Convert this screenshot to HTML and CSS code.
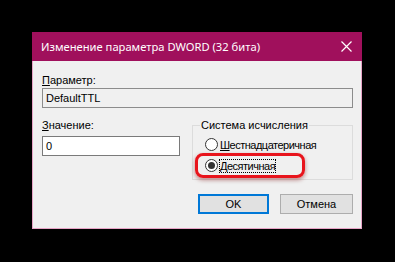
FILE: index.html
```html
<!DOCTYPE html>
<html lang="ru">
<head>
    <meta charset="UTF-8">
    <title>Изменение параметра DWORD (32 бита)</title>
    <link rel="stylesheet" href="styles.css">
</head>
<body>
    <div class="dialog">
        <div class="titlebar">
            <span class="title">Изменение параметра DWORD (32 бита)</span>
            <span class="close">
                <svg width="11" height="11" viewBox="0 0 11 11">
                    <path d="M0.5 0.5 L10.5 10.5 M10.5 0.5 L0.5 10.5" stroke="#fff" stroke-width="1.2" fill="none"/>
                </svg>
            </span>
        </div>
        <div class="content">
            <div class="label"><u>П</u>араметр:</div>
            <div class="field readonly">DefaultTTL</div>

            <div class="row">
                <div class="value-col">
                    <div class="label"><u>З</u>начение:</div>
                    <div class="field value">0</div>
                </div>
                <fieldset class="group">
                    <legend>Система исчисления</legend>
                    <div class="radio">
                        <span class="dot"></span>
                        <span><u>Ш</u>естнадцатеричная</span>
                    </div>
                    <div class="radio checked">
                        <span class="dot"></span>
                        <span class="focus"><u>Д</u>есятичная</span>
                        <span class="mark"></span>
                    </div>
                </fieldset>
            </div>

            <div class="buttons">
                <button class="btn default">OK</button>
                <button class="btn">Отмена</button>
            </div>
        </div>
    </div>
</body>
</html>
```

FILE: styles.css
```css
* {
    margin: 0;
    padding: 0;
    box-sizing: border-box;
}

body {
    background-color: #000;
    font-family: "Liberation Sans", Arial, sans-serif;
    font-size: 11px;
    color: #000;
    width: 395px;
    height: 262px;
    overflow: hidden;
}

.dialog {
    margin: 32px 0 0 32px;
    width: 330px;
    height: 197px;
    display: flex;
    flex-direction: column;
}

.titlebar {
    height: 29px;
    background-color: #a0105c;
    color: #fff;
    display: flex;
    align-items: center;
    justify-content: space-between;
    padding: 0 10px 0 9px;
}

.title {
    font-family: "Noto Sans", sans-serif;
    font-size: 11.2px;
}

.close {
    display: flex;
}

.content {
    flex: 1;
    background-color: #f0f0f0;
    border: 1px solid #e7a3c6;
    border-top: none;
    padding: 13px 8px 0 9px;
}

.label {
    line-height: 13px;
    height: 13px;
}

.field {
    height: 20px;
    border: 1px solid #7a7a7a;
    padding: 0 3px;
    line-height: 18px;
    margin-top: 1px;
}

.readonly {
    background-color: #f0f0f0;
    border-color: #8c8c8c;
}

.value {
    background-color: #fff;
    margin-top: 4px;
    width: 138px;
}

.row {
    display: flex;
    margin-top: 11px;
}

.value-col {
    width: 138px;
}

.group {
    margin-left: 12px;
    width: 161px;
    height: 61px;
    border: 1px solid #dcdcdc;
    padding: 2px 0 0 12px;
}

.group legend {
    padding: 0 1px;
    margin-left: -5px;
    line-height: 13px;
}

.radio {
    display: flex;
    align-items: center;
    height: 21px;
    position: relative;
    letter-spacing: -0.5px;
}

.dot {
    width: 13px;
    height: 13px;
    border: 1px solid #333;
    border-radius: 50%;
    background-color: #fff;
    margin-right: 2px;
    display: flex;
    align-items: center;
    justify-content: center;
}

.checked .dot::after {
    content: "";
    width: 7px;
    height: 7px;
    border-radius: 50%;
    background-color: #333;
}

.focus {
    outline: 1px dotted #000;
}

.mark {
    position: absolute;
    left: -10px;
    top: -2px;
    width: 110px;
    height: 25px;
    border: 3px solid #e8141c;
    border-radius: 8px;
    box-shadow: 0 2px 4px rgba(120, 0, 0, 0.45);
}

.buttons {
    display: flex;
    justify-content: flex-end;
    gap: 11px;
    margin-top: 14px;
}

.btn {
    width: 73px;
    height: 20px;
    font-family: "Liberation Sans", Arial, sans-serif;
    font-size: 11px;
    background-color: #e1e1e1;
    border: 1px solid #adadad;
    color: #000;
}

.default {
    width: 71px;
    border: 2px solid #0078d7;
}
```
